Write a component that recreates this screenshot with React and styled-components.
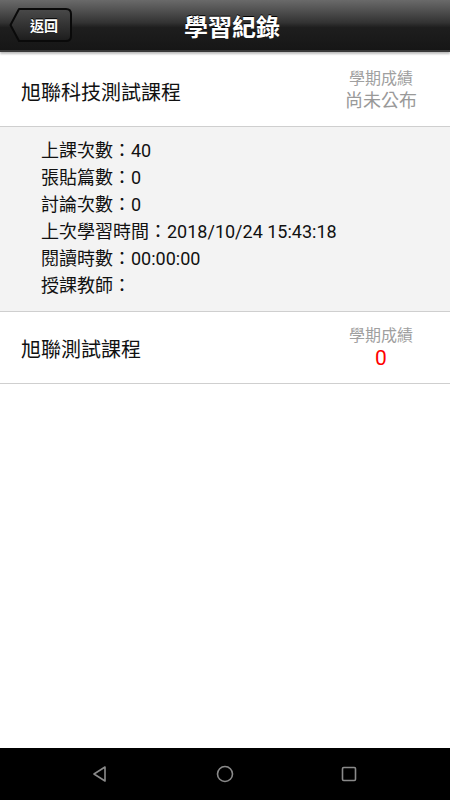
import React from "react";
import styled, { createGlobalStyle } from "styled-components";

const GlobalStyle = createGlobalStyle`
  html, body {
    margin: 0;
    padding: 0;
    background: #fff;
  }
  body {
    font-family: Roboto, "Noto Sans CJK TC", "Noto Sans", sans-serif;
  }
`;

const courses = [
  {
    name: "旭聯科技測試課程",
    score: "尚未公布",
    pending: true,
    details: [
      "上課次數：40",
      "張貼篇數：0",
      "討論次數：0",
      "上次學習時間：2018/10/24 15:43:18",
      "閱讀時數：00:00:00",
      "授課教師：",
    ],
  },
  { name: "旭聯測試課程", score: "0", pending: false },
];

const App = () => (
  <Page>
    <GlobalStyle />
    <Header>
      <BackButton>
        <svg width="64" height="36" viewBox="0 0 64 36">
          <defs>
            <linearGradient id="bb" x1="0" y1="0" x2="0" y2="1">
              <stop offset="0" stopColor="#4a4a4a" />
              <stop offset="1" stopColor="#1c1c1c" />
            </linearGradient>
          </defs>
          <path
            d="M10 2 H57 Q62 2 62 7 V29 Q62 34 57 34 H10 L1.5 18 Z"
            fill="url(#bb)"
            stroke="#0a0a0a"
            strokeWidth="2"
            strokeLinejoin="round"
          />
        </svg>
        <BackLabel>返回</BackLabel>
      </BackButton>
      <Title>學習紀錄</Title>
    </Header>
    <List>
      {courses.map((c) => (
        <React.Fragment key={c.name}>
          <CourseRow>
            <CourseName>{c.name}</CourseName>
            <Score>
              <ScoreLabel>學期成績</ScoreLabel>
              <ScoreValue $pending={c.pending}>{c.score}</ScoreValue>
            </Score>
          </CourseRow>
          {c.details && (
            <Details>
              {c.details.map((d) => (
                <DetailLine key={d}>{d}</DetailLine>
              ))}
            </Details>
          )}
        </React.Fragment>
      ))}
    </List>
    <NavBar>
      <svg width="20" height="20" viewBox="0 0 20 20">
        <path d="M15 3 L4 10 L15 17 Z" fill="none" stroke="#8a8a8a" strokeWidth="1.6" strokeLinejoin="round" />
      </svg>
      <svg width="20" height="20" viewBox="0 0 20 20">
        <circle cx="10" cy="10" r="7.5" fill="none" stroke="#8a8a8a" strokeWidth="1.6" />
      </svg>
      <svg width="20" height="20" viewBox="0 0 20 20">
        <rect x="3.5" y="3.5" width="13" height="13" rx="1.2" fill="none" stroke="#8a8a8a" strokeWidth="1.6" />
      </svg>
    </NavBar>
  </Page>
);

const Page = styled.div`
  width: 450px;
  height: 800px;
  display: flex;
  flex-direction: column;
  background: #fff;
  overflow: hidden;
`;

const Header = styled.div`
  position: relative;
  height: 50px;
  flex-shrink: 0;
  display: flex;
  align-items: center;
  justify-content: center;
  background: linear-gradient(#6a6a6a 0%, #333 45%, #1e1e1e 55%, #161616 100%);
  border-bottom: 2px solid #3a3a3a;
  box-shadow: 0 2px 2px #bdbdbd;
`;

const BackButton = styled.div`
  position: absolute;
  left: 9px;
  top: 7px;
  width: 64px;
  height: 36px;
  display: flex;
  align-items: center;
  justify-content: center;

  svg {
    position: absolute;
    inset: 0;
  }
`;

const BackLabel = styled.span`
  position: relative;
  margin-left: 6px;
  color: #fff;
  font-size: 14px;
  font-weight: 700;
  font-family: "Noto Sans CJK TC", sans-serif;
  text-shadow: 0 -1px 0 #000;
`;

const Title = styled.h1`
  margin: 0 0 0 14px;
  color: #fff;
  font-size: 24px;
  font-weight: 700;
  font-family: "Noto Sans CJK TC", sans-serif;
  text-shadow: 0 -1px 0 #000;
`;

const List = styled.div`
  flex: 1;
  margin-top: 3px;
`;

const CourseRow = styled.div`
  height: 72px;
  display: flex;
  align-items: center;
  justify-content: space-between;
  padding: 0 24px 0 21px;
  border-bottom: 1px solid #cfcfcf;
  box-sizing: border-box;
`;

const CourseName = styled.div`
  font-size: 20px;
  color: #111;
  font-family: "Noto Sans CJK TC", sans-serif;
  margin-top: 2px;
`;

const Score = styled.div`
  width: 90px;
  display: flex;
  flex-direction: column;
  align-items: center;
  margin-top: -2px;
`;

const ScoreLabel = styled.div`
  font-size: 16px;
  line-height: 22px;
  color: #a0a0a0;
  font-family: "Noto Sans CJK TC", sans-serif;
`;

const ScoreValue = styled.div`
  font-size: ${(p) => (p.$pending ? "18px" : "21px")};
  line-height: 26px;
  color: ${(p) => (p.$pending ? "#999" : "#ff0000")};
  font-family: Roboto, "Noto Sans CJK TC", sans-serif;
`;

const Details = styled.div`
  background: #f3f3f3;
  padding: 10px 0 12px 41px;
  border-bottom: 1px solid #cfcfcf;
`;

const DetailLine = styled.div`
  font-size: 18px;
  line-height: 27px;
  color: #111;
  font-family: Roboto, "Noto Sans CJK TC", sans-serif;
`;

const NavBar = styled.div`
  height: 52px;
  flex-shrink: 0;
  background: #000;
  display: flex;
  align-items: center;
  justify-content: space-between;
  padding: 0 91px 0 90px;
`;

export default App;
